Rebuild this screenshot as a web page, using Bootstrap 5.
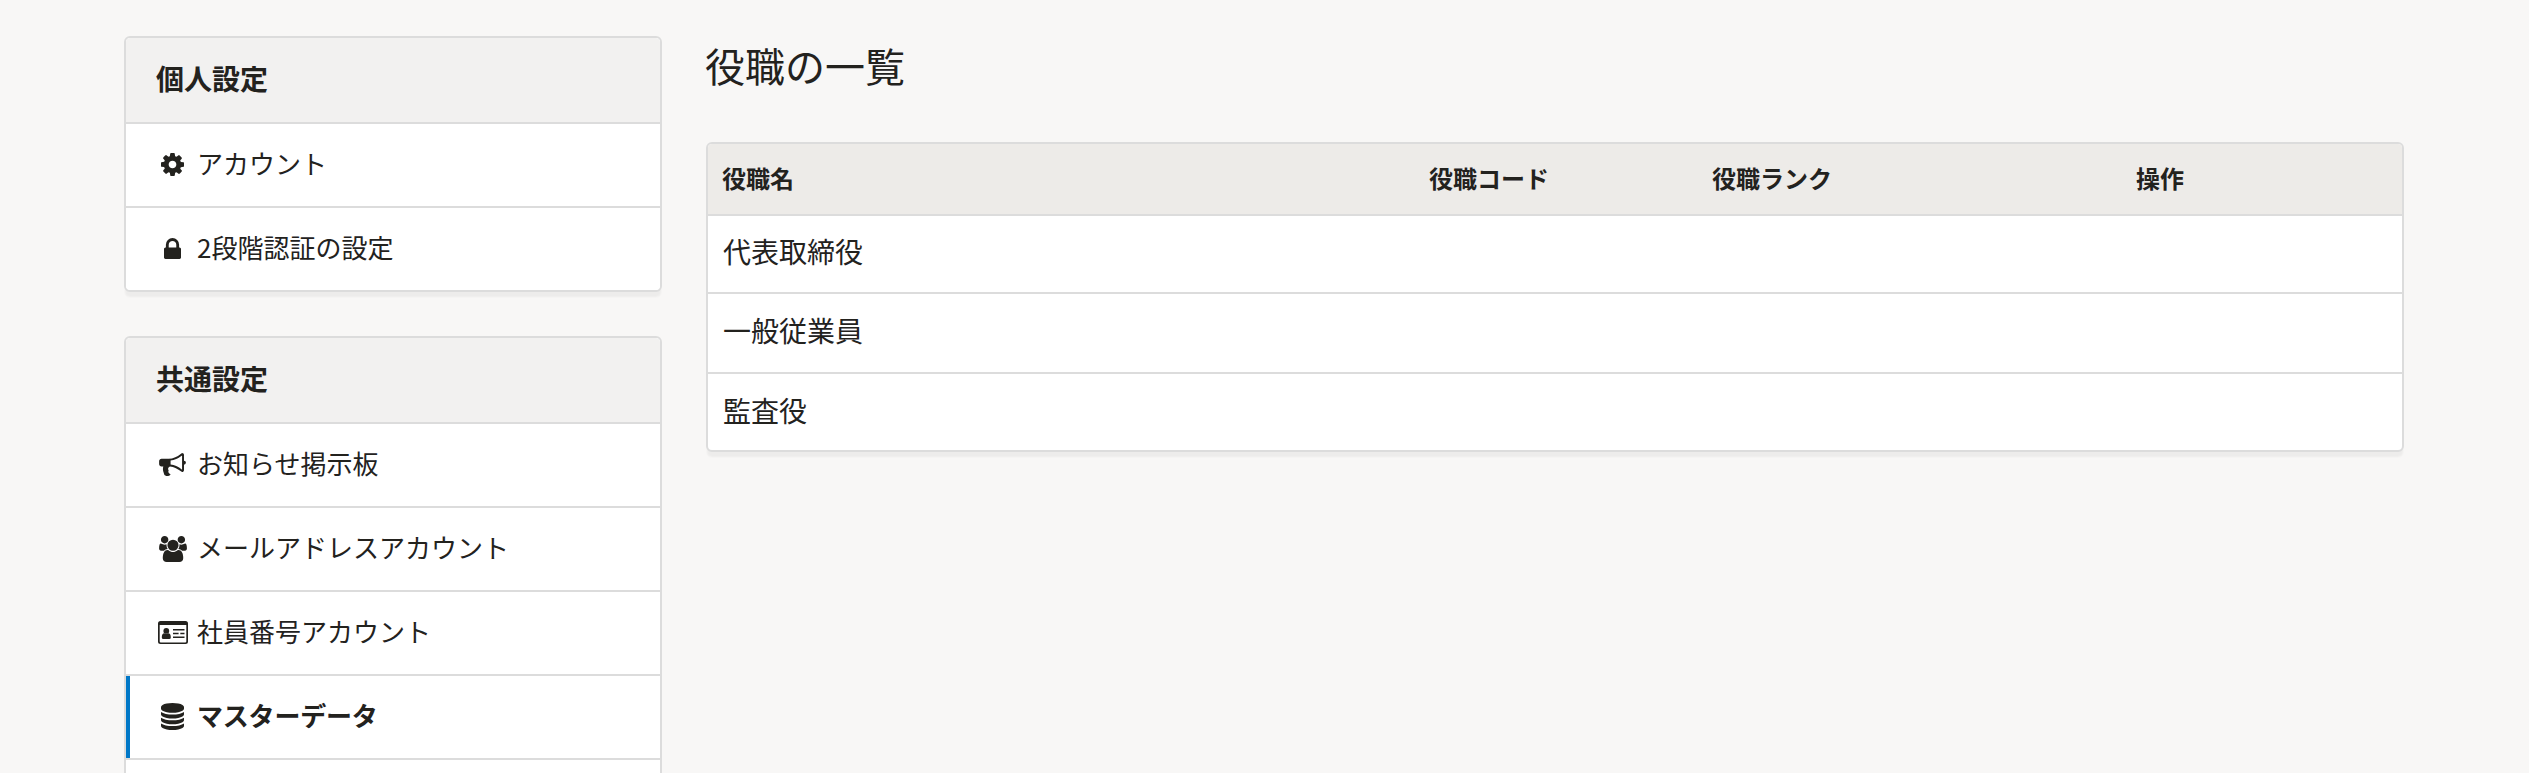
<!DOCTYPE html>
<html lang="ja">
<head>
<meta charset="utf-8">
<meta name="viewport" content="width=device-width, initial-scale=1">
<title>役職の一覧</title>
<link rel="stylesheet" href="https://cdn.jsdelivr.net/npm/bootstrap@5.3.0/dist/css/bootstrap.min.css">
<style>
  body { background: #f8f7f6; color: #23221e; font-family: "Noto Sans CJK JP", sans-serif; height: 773px; overflow: hidden; }
  .page-shell { height: 773px; overflow: hidden; padding: 36px 125px 0 124px; gap: 44px; }
  .side-col { width: 538px; gap: 44px; }
  .panel { --bs-card-border-radius: 6px; --bs-card-inner-border-radius: 4px; border: 2px solid #dcdcdc; box-shadow: 0 6px 2px -1px rgba(35, 34, 30, .05); background: #fff; color: inherit; overflow: hidden; }
  .panel .card-header { height: 86px; padding: 0 30px; background: #f2f1f0; border-bottom: 2px solid #dcdcdc; font-size: 28px; line-height: 80px; font-weight: 700; }
  .panel .list-group-item { height: 84px; padding: 0 30px 4px; border: 0; border-bottom: 2px solid #dcdcdc; font-size: 26px; line-height: 1; color: #23221e; background: #fff; }
  .panel .list-group-item:last-child { height: 82px; border-bottom: 0; }
  .panel .list-group-item.current { font-weight: 700; letter-spacing: -.2px; box-shadow: inset 4px 0 0 #0077c7; }
  .ico { width: 33px; margin-right: 8px; padding-top: 3px; }
  .ico svg { display: block; fill: #23221e; }
  .page-title { font-size: 40px; line-height: 58px; font-weight: 400; margin: 0 0 48px -1px; }
  .data-table { table-layout: fixed; border-collapse: separate; border-spacing: 0; margin: 0; color: inherit; --bs-table-bg: transparent; }
  .data-table > :not(caption) > * > * { padding: 0 14px 6px; border-bottom: 2px solid #dcdcdc; vertical-align: middle; color: #23221e; }
  .data-table > thead > tr > th { height: 72px; padding-bottom: 3px; background: #edebe8; font-size: 24px; line-height: 1; font-weight: 700; }
  .data-table > tbody > tr > td { height: 78px; padding-left: 15px; font-size: 28px; line-height: 1; }
  .data-table > tbody > tr.middle-row > td { height: 80px; padding-bottom: 7px; }
  .data-table > tbody > tr:last-child > td { height: 76px; padding-bottom: 4px; border-bottom: 0; }
  .c-name { width: 707px; } .c-code { width: 283px; } .c-rank { width: 424px; }
</style>
</head>
<body>
<div class="page-shell d-flex align-items-start">
  <aside class="side-col d-flex flex-column flex-shrink-0">
    <nav class="card panel">
      <div class="card-header">個人設定</div>
      <div class="list-group list-group-flush">
        <a href="#" class="list-group-item d-flex align-items-center"><span class="ico d-flex justify-content-center"><svg width="23" height="23" viewBox="0 128 1536 1536"><path d="M1024 896q0-106-75-181t-181-75-181 75-75 181 75 181 181 75 181-75 75-181zm512-109v222q0 12-8 23t-20 13l-185 28q-19 54-39 91 35 50 107 138 10 12 10 25t-9 23q-27 37-99 108t-94 71q-12 0-26-9l-138-108q-44 23-91 38-16 136-29 186-7 28-36 28h-222q-14 0-24.5-8.5t-11.5-21.5l-28-184q-49-16-90-37l-141 107q-10 9-25 9-14 0-25-11-126-114-165-168-7-10-7-23 0-12 8-23 15-21 51-66.500t54-70.500q-27-50-41-99l-183-27q-13-2-21-12.500t-8-23.500v-222q0-12 8-23t19-13l186-28q14-46 39-92-40-57-107-138-10-12-10-24 0-10 9-23 26-36 98.500-107.500t94.500-71.500q13 0 26 10l138 107q44-23 91-38 16-136 29-186 7-28 36-28h222q14 0 24.500 8.500t11.500 21.500l28 184q49 16 90 37l142-107q9-9 24-9 13 0 25 10 129 119 165 170 7 8 7 22 0 12-8 23-15 21-51 66.500t-54 70.500q26 50 41 98l183 28q13 2 21 12.500t8 23.500z"/></svg></span>アカウント</a>
        <a href="#" class="list-group-item d-flex align-items-center"><span class="ico d-flex justify-content-center"><svg width="17" height="21" viewBox="0 128 1152 1408"><path d="M320 768h512v-192q0-106-75-181t-181-75-181 75-75 181v192zm832 96v576q0 40-28 68t-68 28h-960q-40 0-68-28t-28-68v-576q0-40 28-68t68-28h32v-192q0-184 132-316t316-132 316 132 132 316v192h32q40 0 68 28t28 68z"/></svg></span>2段階認証の設定</a>
      </div>
    </nav>
    <nav class="card panel">
      <div class="card-header">共通設定</div>
      <div class="list-group list-group-flush">
        <a href="#" class="list-group-item d-flex align-items-center"><span class="ico d-flex justify-content-center"><svg width="27" height="23" viewBox="0 128 1792 1540"><path d="M1664 640q53 0 90.500 37.500t37.500 90.500-37.500 90.500-90.500 37.500v384q0 52-38 90t-90 38q-417-347-812-380-58 19-91 66t-31 100.500 40 92.500q-20 33-23 65.500t6 58 33.500 55 48 50 61.500 50.500q-29 58-111.500 83t-168.500 11.500-132-55.500q-7-23-29.500-87.500t-32-94.500-23-89-15-101 3.500-98.500 22-110.500h-122q-66 0-113-47t-47-113v-192q0-66 47-113t113-47h480q435 0 896-384 52 0 90 38t38 90v384zm-128 604v-954q-394 302-768 343v270q377 42 768 341z"/></svg></span>お知らせ掲示板</a>
        <a href="#" class="list-group-item d-flex align-items-center"><span class="ico d-flex justify-content-center"><svg width="28" height="26" viewBox="0 0 1920 1792"><path d="M593 896q-162 5-265 128h-134q-82 0-138-40.500t-56-118.500q0-353 124-353 6 0 43.500 21t97.500 42.500 119 21.500q67 0 133-23-5 37-5 66 0 139 81 256zm1071 637q0 120-73 189.500t-194 69.500h-874q-121 0-194-69.500t-73-189.500q0-53 3.500-103.500t14-109 26.500-108.500 43-97.500 62-81 85.500-53.500 111.500-20q10 0 43 21.500t73 48 107 48 135 21.500 135-21.500 107-48 73-48 43-21.500q61 0 111.500 20t85.500 53.500 62 81 43 97.500 26.500 108.500 14 109 3.500 103.500zm-1024-1277q0 106-75 181t-181 75-181-75-75-181 75-181 181-75 181 75 75 181zm704 384q0 159-112.500 271.500t-271.500 112.500-271.500-112.500-112.500-271.500 112.500-271.500 271.500-112.500 271.500 112.500 112.500 271.500zm576 225q0 78-56 118.500t-138 40.500h-134q-103-123-265-128 81-117 81-256 0-29-5-66 66 23 133 23 59 0 119-21.500t97.500-42.500 43.500-21q124 0 124 353zm-128-609q0 106-75 181t-181 75-181-75-75-181 75-181 181-75 181 75 75 181z"/></svg></span>メールアドレスアカウント</a>
        <a href="#" class="list-group-item d-flex align-items-center"><span class="ico d-flex justify-content-center"><svg width="30" height="23" viewBox="0 0 30 23"><path fill-rule="evenodd" d="M2.500 0h25Q30 0 30 2.500v18Q30 23 27.500 23h-25Q0 23 0 20.500v-18Q0 0 2.500 0zM1.700 4v16.600q0 .8.800.8h25q.8 0 .8-.8V4z"/><circle cx="8.300" cy="9.900" r="2.900"/><path d="M5.900 12.200q2.400 1.500 4.800 0 2.100.6 2.100 4.200 0 1.700-1.600 1.700H5.400q-1.600 0-1.600-1.700 0-3.600 2.100-4.200zM15 8h11.500v1.500H15zM15 11.700h5.600v1.500H15zM22.300 11.700h4.200v1.500h-4.200zM15 15.600h11.500v1.500H15z"/></svg></span>社員番号アカウント</a>
        <a href="#" class="list-group-item current d-flex align-items-center"><span class="ico d-flex justify-content-center"><svg width="23" height="27" viewBox="0 0 1536 1792"><path d="M768 768q237 0 443-43t325-127v170q0 69-103 128t-280 93.500-385 34.500-385-34.500-280-93.500-103-128v-170q119 84 325 127t443 43zm0 768q237 0 443-43t325-127v170q0 69-103 128t-280 93.500-385 34.500-385-34.500-280-93.500-103-128v-170q119 84 325 127t443 43zm0-384q237 0 443-43t325-127v170q0 69-103 128t-280 93.500-385 34.500-385-34.500-280-93.500-103-128v-170q119 84 325 127t443 43zm0-1152q208 0 385 34.500t280 93.500 103 128v128q0 69-103 128t-280 93.500-385 34.500-385-34.500-280-93.500-103-128v-128q0-69 103-128t280-93.500 385-34.500z"/></svg></span>マスターデータ</a>
        <div class="list-group-item"></div>
      </div>
    </nav>
  </aside>
  <main class="flex-grow-1">
    <h1 class="page-title">役職の一覧</h1>
    <div class="card panel">
      <table class="table data-table">
        <colgroup><col class="c-name"><col class="c-code"><col class="c-rank"><col></colgroup>
        <thead><tr><th>役職名</th><th>役職コード</th><th>役職ランク</th><th>操作</th></tr></thead>
        <tbody>
          <tr><td>代表取締役</td><td></td><td></td><td></td></tr>
          <tr class="middle-row"><td>一般従業員</td><td></td><td></td><td></td></tr>
          <tr><td>監査役</td><td></td><td></td><td></td></tr>
        </tbody>
      </table>
    </div>
  </main>
</div>
<script src="https://cdn.jsdelivr.net/npm/bootstrap@5.3.0/dist/js/bootstrap.bundle.min.js"></script>
</body>
</html>
